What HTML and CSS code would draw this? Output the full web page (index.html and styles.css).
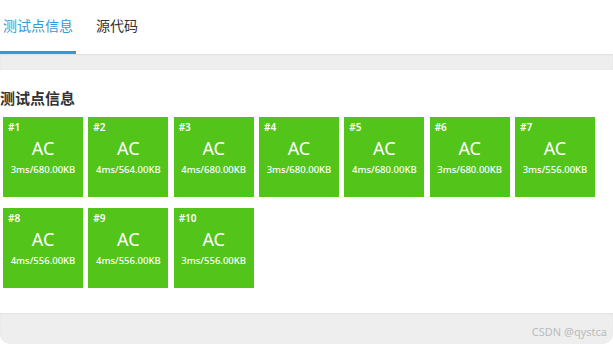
FILE: index.html
```html
<!doctype html>
<html lang="zh">
<head>
	<meta charset="UTF-8">
	<title>测试点信息</title>
	<link rel="stylesheet" href="styles.css">
</head>
<body>
	<div class="page">
		<div class="tabs">
			<a href="javascript:;" class="tab active">测试点信息</a>
			<a href="javascript:;" class="tab">源代码</a>
		</div>
		<div class="gap"></div>
		<div class="card">
			<h3 class="title">测试点信息</h3>
			<ul class="cases">
				<li><span class="no">#1</span><span class="res">AC</span><span class="use">3ms/680.00KB</span></li>
				<li><span class="no">#2</span><span class="res">AC</span><span class="use">4ms/564.00KB</span></li>
				<li><span class="no">#3</span><span class="res">AC</span><span class="use">4ms/680.00KB</span></li>
				<li><span class="no">#4</span><span class="res">AC</span><span class="use">3ms/680.00KB</span></li>
				<li><span class="no">#5</span><span class="res">AC</span><span class="use">4ms/680.00KB</span></li>
				<li><span class="no">#6</span><span class="res">AC</span><span class="use">3ms/680.00KB</span></li>
				<li><span class="no">#7</span><span class="res">AC</span><span class="use">3ms/556.00KB</span></li>
				<li><span class="no">#8</span><span class="res">AC</span><span class="use">4ms/556.00KB</span></li>
				<li><span class="no">#9</span><span class="res">AC</span><span class="use">4ms/556.00KB</span></li>
				<li><span class="no">#10</span><span class="res">AC</span><span class="use">3ms/556.00KB</span></li>
			</ul>
		</div>
		<div class="foot">CSDN @qystca</div>
	</div>
</body>
</html>
```

FILE: styles.css
```css
*{margin: 0;padding: 0;list-style: none;}
body{background: #fff; font-family: "Noto Sans", "Noto Sans CJK SC", sans-serif; color: #333;}
.page{width: 613px; height: 344px; overflow: hidden;}
.tabs{height: 54px; background: #fff; display: flex;}
.tab{display: block; height: 51px; line-height: 51px; padding: 0 3px; margin-right: 17px; font-size: 14px; color: #333; text-decoration: none; border-bottom: 3px solid transparent; font-family: "Noto Sans CJK SC", sans-serif;}
.tab.active{color: #3498db; border-bottom-color: #3498db;}
.gap{height: 16px; background: #eee; box-shadow: inset 0 1px 2px rgba(0,0,0,.06);}
.card{background: #fff; height: 243px; padding-top: 18px; box-sizing: border-box;}
.title{font-size: 15px; line-height: 20px; font-weight: bold; color: #333; font-family: "Noto Sans CJK SC", sans-serif;}
.cases{display: flex; flex-wrap: wrap; column-gap: 5.33px; row-gap: 11px; padding: 9px 0 0 3px; width: 600px;}
.cases li{width: 80px; height: 80px; background: #52c41a; color: #fff; display: flex; flex-direction: column; padding: 3px 5px 0; box-sizing: border-box;}
.cases .no{font-size: 10px; line-height: 14px; font-weight: 600;}
.cases .res{font-size: 18px; line-height: 24px; margin-top: 2px; text-align: center;}
.cases .use{font-size: 9.5px; line-height: 14px; margin-top: 3px; text-align: center; font-weight: 500;}
.foot{height: 31px; background: #eee; border-radius: 0 0 10px 10px; box-shadow: inset 0 1px 2px rgba(0,0,0,.05); text-align: right; font-size: 11px; line-height: 38px; padding: 0 6px 0 0; color: #bbb; box-sizing: border-box;}
```
